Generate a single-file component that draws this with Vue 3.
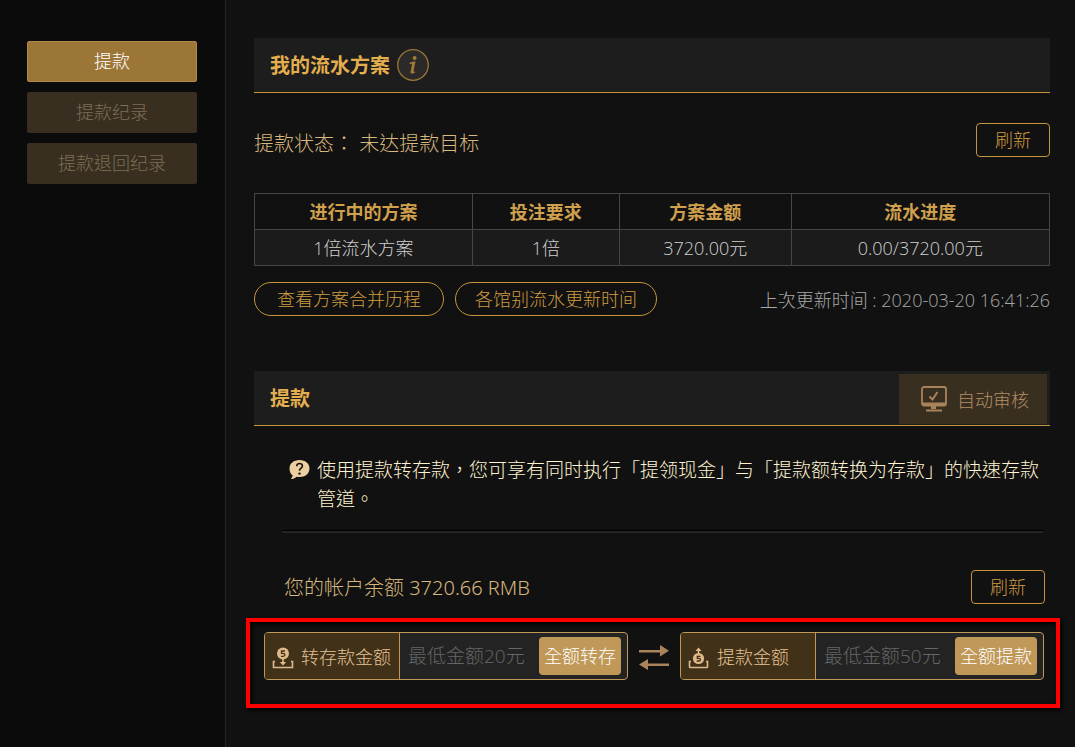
<script setup>
import { ref } from 'vue'

const menu = ['提款', '提款纪录', '提款退回纪录']
const active = ref(0)

const heads = ['进行中的方案', '投注要求', '方案金额', '流水进度']
const rows = [['1倍流水方案', '1倍', '3720.00元', '0.00/3720.00元']]

const transfer = ref('')
const withdraw = ref('')
</script>

<template>
  <div class="page">
    <nav class="side">
      <button
        v-for="(item, i) in menu"
        :key="item"
        type="button"
        class="side-btn"
        :class="{ active: i === active }"
        @click="active = i"
      >{{ item }}</button>
    </nav>

    <main class="main">
      <section class="plan">
        <header class="bar">
          <h2>我的流水方案</h2>
          <button type="button" class="info" aria-label="说明">
            <svg viewBox="0 0 32 32" width="32" height="32">
              <circle cx="16" cy="16" r="15.3" fill="#2b2a28" stroke="#9c7634" stroke-width="1.3" />
              <circle cx="17.6" cy="9" r="2" fill="#a37b37" />
              <path d="M12.600 14.600c1.600-.9 3.200-1.300 4.900-1.400l-2 9.300c-.2 1 .2 1.300 1.700.4" fill="none" stroke="#a37b37" stroke-width="1.600" />
              <path d="M15 13.800h2.600l-1.700 8.600c0 .8.900.6 1.900 0l.3.800c-1.600 1.300-4.800 2.200-4.600-.3l1.500-7.400z" fill="#a37b37" />
            </svg>
          </button>
        </header>

        <div class="status">
          <p>提款状态： 未达提款目标</p>
          <button type="button" class="refresh">刷新</button>
        </div>

        <table class="grid">
          <colgroup>
            <col class="c1"><col class="c2"><col class="c3"><col class="c4">
          </colgroup>
          <thead>
            <tr><th v-for="h in heads" :key="h" scope="col">{{ h }}</th></tr>
          </thead>
          <tbody>
            <tr v-for="r in rows" :key="r[0]"><td v-for="c in r" :key="c">{{ c }}</td></tr>
          </tbody>
        </table>

        <div class="tools">
          <button type="button" class="pill">查看方案合并历程</button>
          <button type="button" class="pill wide">各馆别流水更新时间</button>
          <p class="updated">上次更新时间 : 2020-03-20 16:41:26</p>
        </div>
      </section>

      <section class="draw">
        <header class="bar">
          <h2>提款</h2>
          <button type="button" class="audit">
            <svg viewBox="0 0 26 26" width="26" height="26" fill="none" stroke="#a9845b">
              <rect x="1" y="1" width="24" height="18.500" rx="2" stroke-width="1.800" />
              <path d="M2 18h22" stroke-width="3" />
              <path d="M8.500 10.500l3 3L16.500 6" stroke-width="2" />
              <path d="M12.500 20v3" stroke-width="5" />
              <path d="M5 24.500h16" stroke-width="2" />
            </svg>
            <span>自动审核</span>
          </button>
        </header>

        <div class="notice">
          <svg viewBox="0 0 21 20" width="21" height="20">
            <path d="M10.500 0C16.300 0 20.500 3.500 20.500 8.500S16.300 17 10.500 17c-1 0-2-.1-2.900-.3C6 18.200 4 19 1.700 19c1-.9 1.700-2.100 2-3.500C1.500 14 .5 11.500.5 8.500.5 3.500 4.700 0 10.500 0z" fill="#eccfa0" />
            <path d="M7.700 6.300c.1-3.700 5.800-3.500 5.700-.3 0 2.200-2.900 2.200-2.900 4.800" fill="none" stroke="#15120e" stroke-width="1.600" />
            <circle cx="10.500" cy="13.600" r="1.200" fill="#15120e" />
          </svg>
          <p>使用提款转存款，您可享有同时执行「提领现金」与「提款额转换为存款」的快速存款管道。</p>
        </div>

        <div class="balance">
          <p>您的帐户余额 <span class="amount">3720.66 RMB</span></p>
          <button type="button" class="refresh">刷新</button>
        </div>

        <div class="callout">
          <div class="field">
            <label for="transfer">
              <svg viewBox="0 0 22 22" width="22" height="22">
                <circle cx="11" cy="6.500" r="6" fill="#dfb98a" />
                <path d="M13 4H9.500v2.300H11c2.600 0 2.600 3 0 3H9" fill="none" stroke="#3f3018" stroke-width="1.300" />
                <path d="M10.200 12h1.600v3h2.400L11 18.500 7.800 15h2.400z" fill="#dfb98a" />
                <path d="M3 14.500H1.500v6h19v-6H19" fill="none" stroke="#dfb98a" stroke-width="1.600" />
              </svg>
              <span>转存款金额</span>
            </label>
            <input id="transfer" v-model="transfer" type="text" placeholder="最低金额20元">
            <button type="button">全额转存</button>
          </div>

          <svg class="swap" viewBox="0 0 30 26" width="30" height="26" fill="#a9845b">
            <path d="M0 5h21V0l9 5.800-9 5.700V7.500H0z" />
            <path d="M30 18.500H9V14l-9 5.500L9 25v-4h21z" />
          </svg>

          <div class="field">
            <label for="withdraw">
              <svg viewBox="0 0 22 22" width="22" height="22">
                <circle cx="10.500" cy="11.500" r="5.600" fill="#dfb98a" />
                <path d="M12.500 9.300H9.300v2h1.400c2.400 0 2.400 2.700 0 2.700H8.700" fill="none" stroke="#3f3018" stroke-width="1.300" />
                <path d="M9.700 6.500V4H7.500l3-3.500 3 3.500h-2.200v2.500z" fill="#dfb98a" />
                <path d="M3 14.500H1.500v5.200q0 .8.800.8h16.400q.8 0 .8-.8v-5.200H18" fill="none" stroke="#dfb98a" stroke-width="1.600" />
              </svg>
              <span>提款金额</span>
            </label>
            <input id="withdraw" v-model="withdraw" type="text" placeholder="最低金额50元">
            <button type="button">全额提款</button>
          </div>
        </div>
      </section>
    </main>
  </div>
</template>

<style>
body {
  margin: 0;
  background: #111;
}
</style>

<style scoped>
.page {
  display: flex;
  min-height: 100vh;
  background: #111;
  color: #d8b87e;
  font-family: "Open Sans", "Noto Sans CJK TC", sans-serif;
  font-size: 18px;
  font-weight: 300;
}
.page * {
  box-sizing: border-box;
}
button,
input {
  margin: 0;
  padding: 0;
  font: inherit;
}
button {
  padding-bottom: 2px;
  white-space: nowrap;
  cursor: pointer;
}
h2,
p {
  margin: 0;
}
svg {
  display: block;
  flex: none;
}
.side {
  display: flex;
  flex: none;
  flex-direction: column;
  gap: 10px;
  width: 226px;
  padding: 41px 28px 0 27px;
  background: #0b0b0b;
  border-right: 1px solid #262626;
}
.side-btn {
  height: 41px;
  padding-bottom: 4px;
  border: 1px solid #382f21;
  border-radius: 2px;
  background: #382f21;
  color: #7c6e54;
}
.side-btn.active {
  background: #9c7636;
  border-color: #b08a48;
  color: #fff;
}
.main {
  flex: 1;
  min-width: 0;
  padding: 38px 25px 38px 28px;
}
.bar {
  display: flex;
  align-items: center;
  height: 55px;
  padding-left: 16px;
  background: #1d1d1d;
  border-bottom: 1px solid #c5933c;
}
.bar h2 {
  padding-top: 2px;
  font-size: 20px;
  font-weight: 700;
  line-height: 28px;
  color: #e3af4e;
}
.info {
  margin-left: 7px;
  padding: 0;
  border: 0;
  background: none;
}
.status,
.balance {
  display: flex;
  align-items: center;
  justify-content: space-between;
  font-size: 20px;
}
.status {
  margin-top: 30px;
}
.status p {
  padding-top: 4px;
}
.amount {
  font-family: "Noto Sans", "Open Sans", sans-serif;
}
.refresh {
  width: 74px;
  height: 34px;
  border: 1px solid #c5933c;
  border-radius: 4px;
  background: transparent;
  color: #cf9b42;
  font-size: 18px;
}
.grid {
  width: 100%;
  margin-top: 36px;
  border-collapse: collapse;
  table-layout: fixed;
  text-align: center;
}
.c1 { width: 27.400%; }
.c2 { width: 18.500%; }
.c3 { width: 21.600%; }
.c4 { width: 32.500%; }
.grid th,
.grid td {
  height: 36px;
  padding: 0;
  border: 1px solid #464646;
  line-height: 24px;
}
.grid th {
  color: #d0a04c;
  font-weight: 700;
}
.grid td {
  background: #1b1b1b;
  color: #d0d0d0;
}
.tools {
  display: flex;
  align-items: center;
  gap: 11px;
  margin-top: 16px;
}
.pill {
  width: 190px;
  height: 34px;
  border: 1px solid #c5933c;
  border-radius: 17px;
  background: transparent;
  color: #cf9b42;
}
.pill.wide {
  width: 202px;
}
.updated {
  margin-left: auto;
  color: #a8a8a8;
  white-space: nowrap;
}
.draw {
  margin-top: 55px;
}
.audit {
  display: flex;
  align-items: center;
  gap: 10px;
  width: 148px;
  height: 50px;
  margin: 2px 3px 0 auto;
  padding: 0 0 0 22px;
  border: 0;
  background: #382f21;
  color: #b58e63;
}
.notice {
  display: flex;
  gap: 7px;
  margin: 30px 7px 0 28px;
  padding: 0 0 16px 7px;
  border-bottom: 1px solid #000;
  box-shadow: 0 2px 0 #242424;
  color: #fff3d2;
  font-size: 19px;
  line-height: 29px;
}
.notice svg {
  margin-top: 4px;
}
.balance {
  margin: 39px 5px 0 30px;
}
.balance p {
  padding-bottom: 2px;
}
.callout {
  display: flex;
  align-items: center;
  justify-content: space-between;
  gap: 11px;
  margin: 14px -10px 0 -8px;
  padding: 10px 12px 24px 14px;
  border: 4px solid #f00;
  box-shadow: 2px 2px 4px #000, inset 2px 2px 4px #000;
}
.swap {
  margin-top: 4px;
}
.field {
  display: flex;
  flex: 1;
  align-items: center;
  min-width: 0;
  height: 48px;
  padding-right: 6px;
  border: 1px solid #c09858;
  border-radius: 4px;
  background: #232323;
}
.field label {
  display: flex;
  flex: none;
  align-items: center;
  gap: 7px;
  width: 135px;
  height: 46px;
  padding-left: 7px;
  border-right: 1px solid #c09858;
  border-radius: 3px 0 0 3px;
  background: #403118;
  color: #e6c194;
  white-space: nowrap;
}
.field label svg {
  margin-top: 4px;
}
.field input {
  flex: 1;
  min-width: 0;
  height: 46px;
  padding-left: 8px;
  border: 0;
  background: transparent;
  color: #e0b98a;
  font-size: 19px;
}
.field input::placeholder {
  color: #666;
  opacity: 1;
}
.field button {
  flex: none;
  width: 82px;
  height: 38px;
  border: 0;
  border-radius: 4px;
  background: #c09858;
  color: #fff;
}
</style>
